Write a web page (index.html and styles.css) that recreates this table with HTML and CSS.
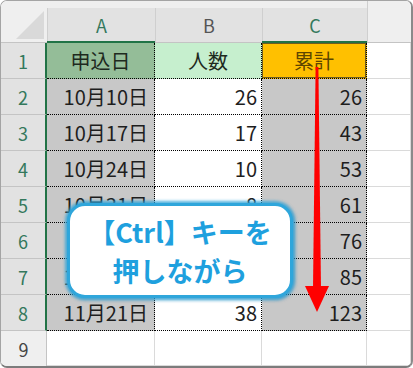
FILE: index.html
```html
<!DOCTYPE html>
<html lang="ja">
<head>
<meta charset="utf-8">
<title>累計の選択</title>
<link rel="stylesheet" href="styles.css">
</head>
<body>
<div class="frame">
  <div class="sheet">
    <!-- header band -->
    <div class="corner"></div>
    <div class="col sel"><span>A</span></div>
    <div class="col"><span>B</span></div>
    <div class="col sel"><span>C</span></div>
    <div class="col blank"></div>

    <div class="rh">1</div>
    <div class="c r h a1">申込日</div>
    <div class="c r h b1">人数</div>
    <div class="c r h c1">累計</div>
    <div class="c"></div>

    <div class="rh">2</div>
    <div class="c r g pa">10月10日</div>
    <div class="c r">26</div>
    <div class="c r g">26</div>
    <div class="c"></div>

    <div class="rh">3</div>
    <div class="c r g pa">10月17日</div>
    <div class="c r">17</div>
    <div class="c r g">43</div>
    <div class="c"></div>

    <div class="rh">4</div>
    <div class="c r g pa">10月24日</div>
    <div class="c r">10</div>
    <div class="c r g">53</div>
    <div class="c"></div>

    <div class="rh">5</div>
    <div class="c r g pa">10月31日</div>
    <div class="c r">8</div>
    <div class="c r g">61</div>
    <div class="c"></div>

    <div class="rh">6</div>
    <div class="c r g pa">11月7日</div>
    <div class="c r">15</div>
    <div class="c r g">76</div>
    <div class="c"></div>

    <div class="rh">7</div>
    <div class="c r g pa">11月14日</div>
    <div class="c r">9</div>
    <div class="c r g">85</div>
    <div class="c"></div>

    <div class="rh">8</div>
    <div class="c r g pa">11月21日</div>
    <div class="c r">38</div>
    <div class="c r g">123</div>
    <div class="c"></div>

    <div class="rh plain">9</div>
    <div class="c"></div>
    <div class="c"></div>
    <div class="c"></div>
    <div class="c"></div>
  </div>

  <svg class="arrow" width="413" height="368" viewBox="0 0 413 368">
    <polygon points="315.6,67 318.4,67 321,289 313,289" fill="#ff0000"/>
    <polygon points="305,286 329,286 317,312" fill="#ff0000"/>
  </svg>

  <div class="callout">
    <div>【Ctrl】キーを</div>
    <div>押しながら</div>
  </div>
</div>
</body>
</html>
```

FILE: styles.css
```css
* { box-sizing: border-box; }

html, body {
  margin: 0;
  padding: 0;
  background: #fff;
}

body {
  font-family: "Noto Sans CJK JP", "Noto Sans", sans-serif;
}

.frame {
  position: relative;
  width: 413px;
  height: 368px;
}

/* worksheet grid */
.sheet {
  width: 100%;
  height: 100%;
  border: 1px solid #a4a4a4;
  border-right: 2px solid #8a8a8a;
  border-bottom: 2px solid #7c7c7c;
  border-radius: 7px;
  overflow: hidden;
  background: #fff;
  display: grid;
  grid-template-columns: 46px 108px 107px 105px 1fr;
  grid-template-rows: 42px repeat(8, 36px) 1fr;
}

/* top-left select-all corner */
.corner {
  position: relative;
  background: #efefef;
  border-bottom: 1px solid #c4c4c4;
}
.corner::after {
  content: "";
  position: absolute;
  right: 3px;
  bottom: 3px;
  width: 28px;
  height: 28px;
  background: #d9d9d9;
  clip-path: polygon(100% 0, 100% 100%, 0 100%);
}

/* column headers */
.col {
  background: #efefef;
  padding-top: 7px;
  display: flex;
  border-bottom: 1px solid #c4c4c4;
}
.col span {
  flex: 1;
  display: flex;
  align-items: center;
  justify-content: center;
  background: #e2e2e2;
  border-left: 1px solid #cfcfcf;
  font-size: 18px;
  color: #555;
}
.col.sel {
  border-bottom: 2px solid #217346;
}
.col.sel span {
  color: #33785c;
}
.col.blank {
  border-left: 1px solid #cfcfcf;
}

/* row headers */
.rh {
  display: flex;
  align-items: center;
  justify-content: center;
  background: #e2e2e2;
  border-bottom: 1px solid #c4c4c4;
  border-right: 2px solid #217346;
  font-size: 18px;
  color: #33785c;
}
.rh.plain {
  background: #efefef;
  border-right: 1px solid #c4c4c4;
  border-bottom: none;
  color: #444;
}

/* cells */
.c {
  display: flex;
  align-items: center;
  justify-content: flex-end;
  padding-right: 4px;
  border-right: 1px solid #dadada;
  border-bottom: 1px solid #dadada;
  font-size: 20px;
  color: #1e1e1e;
}
.c.pa { padding-right: 6px; }
.c.r {
  border-right: 1px dotted #000;
  border-bottom: 1px dotted #000;
}
.c.h {
  justify-content: center;
  padding-right: 0;
}
.c.g { background: #c8c8c8; }
.c.a1 { background: #94bd98; color: #1e2a1e; }
.c.b1 { background: #c6efce; color: #1e2a1e; }
.c.c1 {
  background: #ffc000;
  color: #5c4500;
  box-shadow: inset 0 0 0 1px #6d5c22;
}

/* red drag arrow */
.arrow {
  position: absolute;
  left: 0;
  top: 0;
  pointer-events: none;
}

/* speech box */
.callout {
  position: absolute;
  left: 67px;
  top: 203px;
  width: 226px;
  height: 95px;
  background: #fff;
  border: 3px solid #2fa6db;
  border-radius: 18px;
  box-shadow: 0 0 3px 2px rgba(47, 166, 219, 0.75), 1px 1px 4px rgba(20, 110, 160, 0.6);
  display: flex;
  flex-direction: column;
  align-items: center;
  justify-content: center;
  color: #1ea0de;
  font-weight: 700;
  font-size: 27px;
  line-height: 39px;
}
```
